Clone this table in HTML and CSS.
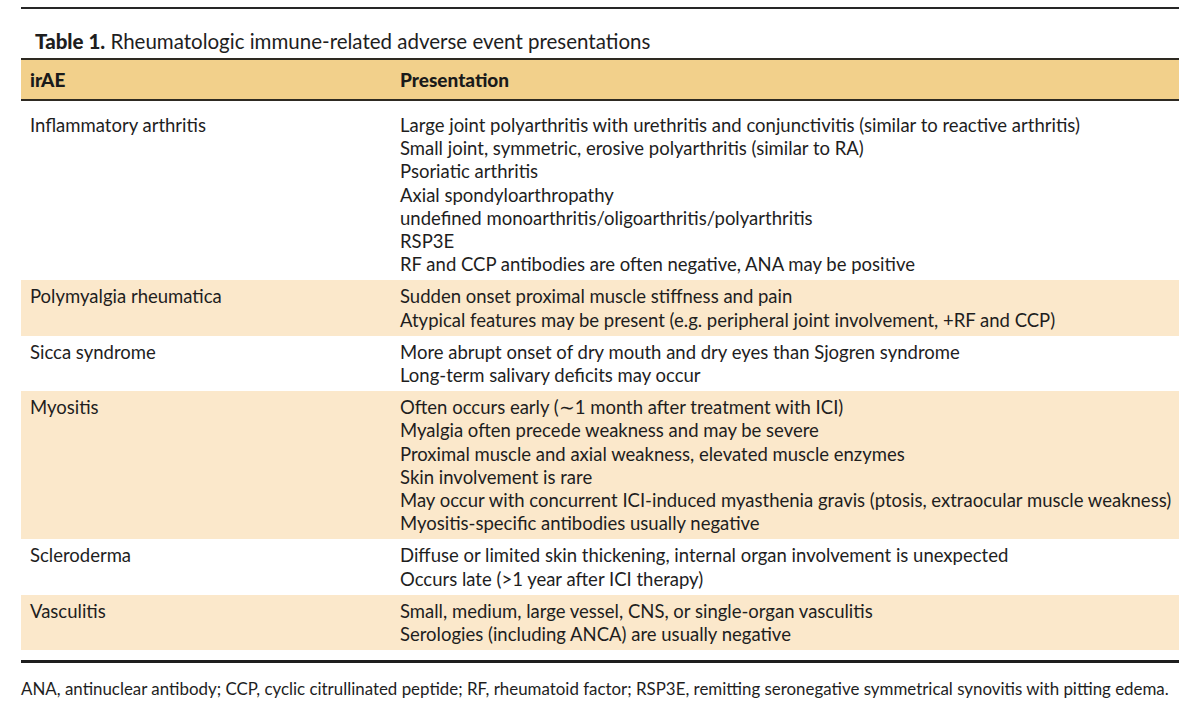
FILE: index.html
```html
<!DOCTYPE html>
<html lang="en">
<head>
<meta charset="utf-8">
<title>Table 1</title>
<link rel="stylesheet" href="styles.css">
</head>
<body>
<div class="page">
  <div class="rule-top"></div>
  <h1 class="caption"><b>Table 1.</b> Rheumatologic immune-related adverse event presentations</h1>
  <table class="tbl">
    <colgroup><col class="col1"><col class="col2"></colgroup>
    <thead>
      <tr><th>irAE</th><th>Presentation</th></tr>
    </thead>
    <tbody>
      <tr class="first">
        <td class="c1">Inflammatory arthritis</td>
        <td class="c2">Large joint polyarthritis with urethritis and conjunctivitis (similar to reactive arthritis)<br>Small joint, symmetric, erosive polyarthritis (similar to RA)<br>Psoriatic arthritis<br>Axial spondyloarthropathy<br>undefined monoarthritis/oligoarthritis/polyarthritis<br>RSP3E<br>RF and CCP antibodies are often negative, ANA may be positive</td>
      </tr>
      <tr class="shade">
        <td class="c1">Polymyalgia rheumatica</td>
        <td class="c2">Sudden onset proximal muscle stiffness and pain<br>Atypical features may be present (e.g. peripheral joint involvement, +RF and CCP)</td>
      </tr>
      <tr>
        <td class="c1">Sicca syndrome</td>
        <td class="c2">More abrupt onset of dry mouth and dry eyes than Sjogren syndrome<br>Long-term salivary deficits may occur</td>
      </tr>
      <tr class="shade">
        <td class="c1">Myositis</td>
        <td class="c2">Often occurs early (&#8764;1 month after treatment with ICI)<br>Myalgia often precede weakness and may be severe<br>Proximal muscle and axial weakness, elevated muscle enzymes<br>Skin involvement is rare<br>May occur with concurrent ICI-induced myasthenia gravis (ptosis, extraocular muscle weakness)<br>Myositis-specific antibodies usually negative</td>
      </tr>
      <tr>
        <td class="c1">Scleroderma</td>
        <td class="c2">Diffuse or limited skin thickening, internal organ involvement is unexpected<br>Occurs late (&gt;1 year after ICI therapy)</td>
      </tr>
      <tr class="shade">
        <td class="c1">Vasculitis</td>
        <td class="c2">Small, medium, large vessel, CNS, or single-organ vasculitis<br>Serologies (including ANCA) are usually negative</td>
      </tr>
    </tbody>
  </table>
  <div class="rule-bottom"></div>
  <p class="foot">ANA, antinuclear antibody; CCP, cyclic citrullinated peptide; RF, rheumatoid factor; RSP3E, remitting seronegative symmetrical synovitis with pitting edema.</p>
</div>
</body>
</html>
```

FILE: styles.css
```css
html, body {
  margin: 0;
  padding: 0;
  background: #ffffff;
}
body {
  font-family: Lato, "Liberation Sans", sans-serif;
  color: #1e1e1e;
}
.page {
  width: 1158px;
  margin-left: 21px;
  padding-top: 7px;
}
.rule-top {
  height: 2px;
  background: #262626;
}
.caption {
  margin: 0;
  padding: 20px 0 0 14px;
  height: 29px;
  font-size: 20.5px;
  line-height: 24px;
  font-weight: 400;
  color: #1e1e1e;
}
.caption b {
  font-weight: 900;
}
.tbl {
  width: 1158px;
  table-layout: fixed;
  border-collapse: collapse;
  font-size: 18.5px;
}
.col1 {
  width: 370px;
}
.col2 {
  width: 788px;
}
.tbl th {
  background: #f2d08b;
  border-top: 2px solid #2e2a22;
  border-bottom: 2px solid #2e2a22;
  text-align: left;
  font-weight: 900;
  font-size: 19px;
  height: 39px;
  padding: 0 9px;
  color: #1a1a1a;
}
.tbl td {
  vertical-align: top;
  line-height: 23.2px;
  padding: 5px 9px 4px;
  white-space: nowrap;
}
.tbl tr.first td {
  padding-top: 13px;
}
.tbl tr.shade td {
  background: #fbe8cb;
}
.rule-bottom {
  height: 3px;
  margin-top: 10px;
  background: #1e1e1e;
}
.foot {
  margin: 16px 0 0;
  font-size: 16.9px;
  line-height: 20px;
  color: #1e1e1e;
  white-space: nowrap;
}
```
